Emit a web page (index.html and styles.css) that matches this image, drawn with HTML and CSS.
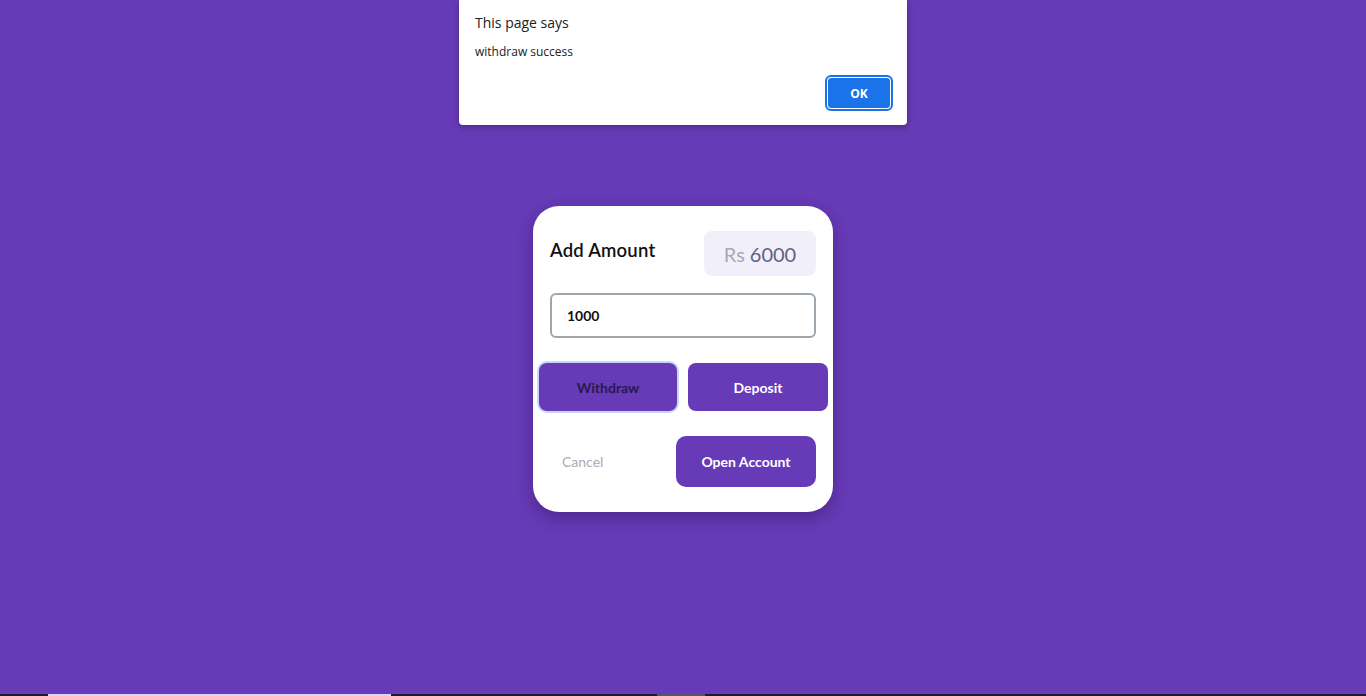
FILE: index.html
```html
<!DOCTYPE html>
<html>
<head>
<meta charset="utf-8">
<link rel="stylesheet" href="styles.css">
</head>
<body>
<div class="page">
  <div class="card">
    <div class="head">
      <h2 class="title">Add Amount</h2>
      <div class="balance"><span class="cur">Rs</span> <span class="amt">6000</span></div>
    </div>
    <div class="input">1000</div>
    <div class="actions">
      <button class="btn btn-focus">Withdraw</button>
      <button class="btn btn-dep">Deposit</button>
    </div>
    <div class="footer">
      <span class="cancel">Cancel</span>
      <button class="btn open">Open Account</button>
    </div>
  </div>
</div>
<div class="dialog">
  <div class="d-title">This page says</div>
  <div class="d-msg">withdraw success</div>
  <div class="d-foot"><button class="ok">OK</button></div>
</div>
<div class="taskbar">
  <div class="seg-light"></div>
  <div class="seg-gray"></div>
</div>
</body>
</html>
```
FILE: styles.css
```css
html, body {
  margin: 0;
  padding: 0;
  height: 100%;
}
body {
  background: #673ab7;
  font-family: Lato, "Open Sans", sans-serif;
  overflow: hidden;
}
.page {
  height: 696px;
  display: flex;
  justify-content: center;
  padding-top: 206px;
  box-sizing: border-box;
}
.card {
  width: 300px;
  height: 306px;
  box-sizing: border-box;
  background: #fff;
  border-radius: 26px;
  box-shadow: 0 6px 16px rgba(30, 10, 60, 0.35);
  padding: 25px 17px 0 17px;
}
.head {
  display: flex;
  justify-content: space-between;
  align-items: flex-start;
}
.title {
  margin: 8px 0 0 0;
  font-size: 18.5px;
  font-weight: 600;
  color: #111;
  letter-spacing: 0.2px;
}
.balance {
  width: 112px;
  height: 45px;
  box-sizing: border-box;
  background: #f1f0fa;
  border-radius: 8px;
  display: flex;
  align-items: center;
  justify-content: center;
  gap: 5px;
  font-size: 20px;
}
.cur { color: #a7aab8; }
.amt { color: #625f86; }
.input {
  margin-top: 17px;
  height: 45px;
  box-sizing: border-box;
  border: 2px solid #9ea7ae;
  border-radius: 6px;
  padding: 0 15px;
  display: flex;
  align-items: center;
  font-size: 14px;
  font-weight: 700;
  color: #111;
}
.actions {
  margin: 25px -12px 0 -11px;
  display: flex;
  gap: 11px;
}
.btn {
  font-family: inherit;
  border: none;
  background: #673ab7;
  color: #fff;
  font-size: 14px;
  font-weight: 700;
  border-radius: 8px;
  height: 48px;
  cursor: pointer;
}
.btn-focus {
  width: 138px;
  color: #2a1850;
  box-shadow: 0 0 0 2px #c7d5ff;
}
.btn-dep {
  width: 140px;
}
.footer {
  margin-top: 25px;
  display: flex;
  justify-content: space-between;
  align-items: center;
}
.cancel {
  margin-left: 12px;
  font-size: 14px;
  color: #a9acb6;
}
.open {
  width: 140px;
  height: 51px;
  border-radius: 10px;
}
.dialog {
  position: absolute;
  top: 0;
  left: 459px;
  width: 448px;
  height: 125px;
  box-sizing: border-box;
  background: #fff;
  border-radius: 0 0 4px 4px;
  box-shadow: 0 2px 6px rgba(0, 0, 0, 0.3);
  padding: 13px 16px 0 16px;
  font-family: "Open Sans", "Noto Sans", sans-serif;
}
.d-title {
  font-size: 14px;
  color: #202124;
}
.d-msg {
  margin-top: 11px;
  font-size: 12px;
  color: #202124;
}
.d-foot {
  display: flex;
  justify-content: flex-end;
  margin-top: 17px;
}
.ok {
  width: 64px;
  height: 32px;
  border-radius: 4px;
  background: #1a73e8;
  color: #fff;
  border: 1px solid #fff;
  outline: 2px solid #1a73e8;
  outline-offset: 0;
  font-family: inherit;
  font-size: 12px;
  font-weight: 700;
  box-sizing: border-box;
}
.taskbar {
  position: absolute;
  left: 0;
  right: 0;
  bottom: 0;
  height: 2px;
  background: #1f1a2a;
}
.seg-light {
  position: absolute;
  left: 48px;
  width: 343px;
  height: 2px;
  background: #ddd6ee;
}
.seg-gray {
  position: absolute;
  left: 657px;
  width: 48px;
  height: 2px;
  background: #5a5560;
}
```
